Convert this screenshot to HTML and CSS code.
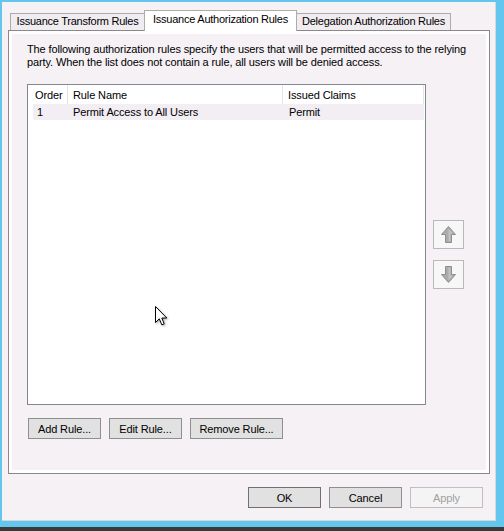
FILE: index.html
```html
<!DOCTYPE html>
<html lang="en">
<head>
    <meta charset="UTF-8">
    <title>Relying Party Properties</title>
    <link rel="stylesheet" href="styles.css">
</head>
<body>
    <div class="dialog">
        <div class="tabs">
            <div class="tab tab-transform">Issuance Transform Rules</div>
            <div class="tab tab-auth active">Issuance Authorization Rules</div>
            <div class="tab tab-deleg">Delegation Authorization Rules</div>
        </div>

        <div class="panel">
            <div class="page">
                <p class="intro">The following authorization rules specify the users that will be permitted access to the relying party. When the list does not contain a rule, all users will be denied access.</p>

                <div class="rules-area">
                    <div class="listview">
                        <div class="lv-header">
                            <div class="col col-order">Order</div>
                            <div class="col col-name">Rule Name</div>
                            <div class="col col-claims">Issued Claims</div>
                        </div>
                        <div class="lv-row">
                            <div class="cell col-order">1</div>
                            <div class="cell col-name">Permit Access to All Users</div>
                            <div class="cell col-claims">Permit</div>
                        </div>
                    </div>

                    <div class="move-buttons">
                        <button class="move-btn" title="Move up">
                            <svg width="15" height="17" viewBox="0 0 15 17">
                                <path d="M7.5 0.5 L14.5 8.5 L10.5 8.5 L10.5 16.5 L4.5 16.5 L4.5 8.5 L0.5 8.5 Z" fill="#ababab" stroke="#8e8e8e"/>
                                <path d="M7.5 2.5 L12 7.5 L9.5 7.5 L9.5 15.5 L7.5 15.5 Z" fill="#c2c2c2"/>
                            </svg>
                        </button>
                        <button class="move-btn" title="Move down">
                            <svg width="15" height="17" viewBox="0 0 15 17">
                                <path d="M7.5 16.5 L14.5 8.5 L10.5 8.5 L10.5 0.5 L4.5 0.5 L4.5 8.5 L0.5 8.5 Z" fill="#ababab" stroke="#8e8e8e"/>
                                <path d="M7.5 14.5 L12 9.5 L9.5 9.5 L9.5 1.5 L7.5 1.5 Z" fill="#c2c2c2"/>
                            </svg>
                        </button>
                    </div>
                </div>

                <div class="rule-buttons">
                    <button class="btn">Add Rule...</button>
                    <button class="btn">Edit Rule...</button>
                    <button class="btn btn-wide">Remove Rule...</button>
                </div>
            </div>
        </div>

        <div class="dialog-buttons">
            <button class="btn btn-default">OK</button>
            <button class="btn">Cancel</button>
            <button class="btn btn-disabled" disabled>Apply</button>
        </div>
    </div>
    <div class="taskbar"></div>

    <svg class="cursor" width="14" height="22" viewBox="0 0 14 22">
        <path d="M0.5 0.5 L0.5 16.5 L4.3 12.8 L6.8 18.8 L9.2 17.8 L6.8 12 L11.8 12 Z" fill="#fff" stroke="#000" stroke-linejoin="round"/>
    </svg>
</body>
</html>
```

FILE: styles.css
```css
html, body {
    margin: 0;
    padding: 0;
}
body {
    width: 504px;
    height: 531px;
    overflow: hidden;
    position: relative;
    background-color: #62c6ee;
    font-family: "Liberation Sans", Arial, sans-serif;
    font-size: 11px;
    letter-spacing: -0.12px;
    color: #000;
}
.dialog {
    box-sizing: border-box;
    width: 494px;
    height: 519px;
    margin: 2px 0 0 2px;
    padding: 8px 0 0 6px;
    background-color: #f5f1f5;
    border-right: 1px solid #d8d8d8;
    border-bottom: 1px solid #d8d8d8;
}
.tabs {
    display: flex;
    align-items: flex-end;
    height: 20px;
    padding-left: 2px;
    position: relative;
    z-index: 1;
}
.tab {
    box-sizing: border-box;
    height: 17px;
    border: 1px solid #acacac;
    border-bottom: 0;
    background-color: #f0ecf0;
    text-align: center;
    line-height: 14px;
    letter-spacing: -0.25px;
    white-space: nowrap;
}
.tab + .tab {
    margin-left: -1px;
}
.tab-transform { width: 135px; }
.tab-auth { width: 153px; }
.tab-deleg { width: 155px; }
.tab.active {
    height: 21px;
    margin-bottom: -1px;
    padding-top: 1px;
    background-color: #fff;
    position: relative;
    z-index: 2;
}
.panel {
    box-sizing: border-box;
    width: 482px;
    height: 444px;
    border: 1px solid #898989;
    background-color: #fff;
    padding: 3px;
}
.page {
    box-sizing: border-box;
    height: 100%;
    background-color: #f5f1f5;
    padding: 9px 0 0 15px;
}
.intro {
    margin: 0;
    width: 452px;
    line-height: 13px;
}
.rules-area {
    display: flex;
    margin-top: 15px;
}
.listview {
    box-sizing: border-box;
    width: 399px;
    height: 321px;
    border: 1px solid #828790;
    background-color: #fff;
    padding: 0 1px 0 5px;
}
.lv-header, .lv-row {
    display: flex;
    white-space: nowrap;
}
.lv-header {
    height: 19px;
}
.lv-header .col {
    box-sizing: border-box;
    height: 19px;
    padding-top: 2px;
    line-height: 17px;
    border-right: 1px solid #e5e5e5;
}
.col-order { width: 35px; padding-left: 2px; }
.col-name { width: 215px; padding-left: 5px; }
.col-claims { flex: 1; padding-left: 5px; }
.lv-row {
    height: 16px;
    line-height: 16px;
    background-color: #f2eef3;
}
.cell {
    box-sizing: border-box;
}
.lv-row .col-order { padding-left: 4px; }
.lv-row .col-claims { padding-left: 6px; }
.move-buttons {
    display: flex;
    flex-direction: column;
    gap: 11px;
    margin-left: 7px;
    padding-top: 136px;
}
.move-btn {
    box-sizing: border-box;
    width: 31px;
    height: 29px;
    padding: 0;
    border: 1px solid #b9b9b9;
    background-color: #f7f7f7;
    display: flex;
    align-items: center;
    justify-content: center;
}
.rule-buttons {
    display: flex;
    gap: 8px;
    margin-top: 13px;
    padding-left: 1px;
}
.btn {
    box-sizing: border-box;
    width: 73px;
    height: 21px;
    padding: 0;
    border: 1px solid #8f8f8f;
    background-color: #e1e1e1;
    font-family: inherit;
    font-size: 11px;
    letter-spacing: -0.12px;
    color: #000;
}
.btn-wide {
    width: 93px;
}
.dialog-buttons {
    display: flex;
    justify-content: flex-end;
    gap: 8px;
    margin-top: 13px;
    padding-right: 12px;
}
.btn-default {
    border-color: #707070;
}
.btn-disabled {
    background-color: #f4f4f4;
    border-color: #bfbfbf;
    color: #a0a0a0;
}
.taskbar {
    height: 4px;
    margin-top: 6px;
    background-color: #3a3a3a;
}
.cursor {
    position: absolute;
    left: 155px;
    top: 306px;
    filter: drop-shadow(1px 1px 1px rgba(0, 0, 0, 0.35));
}
```
